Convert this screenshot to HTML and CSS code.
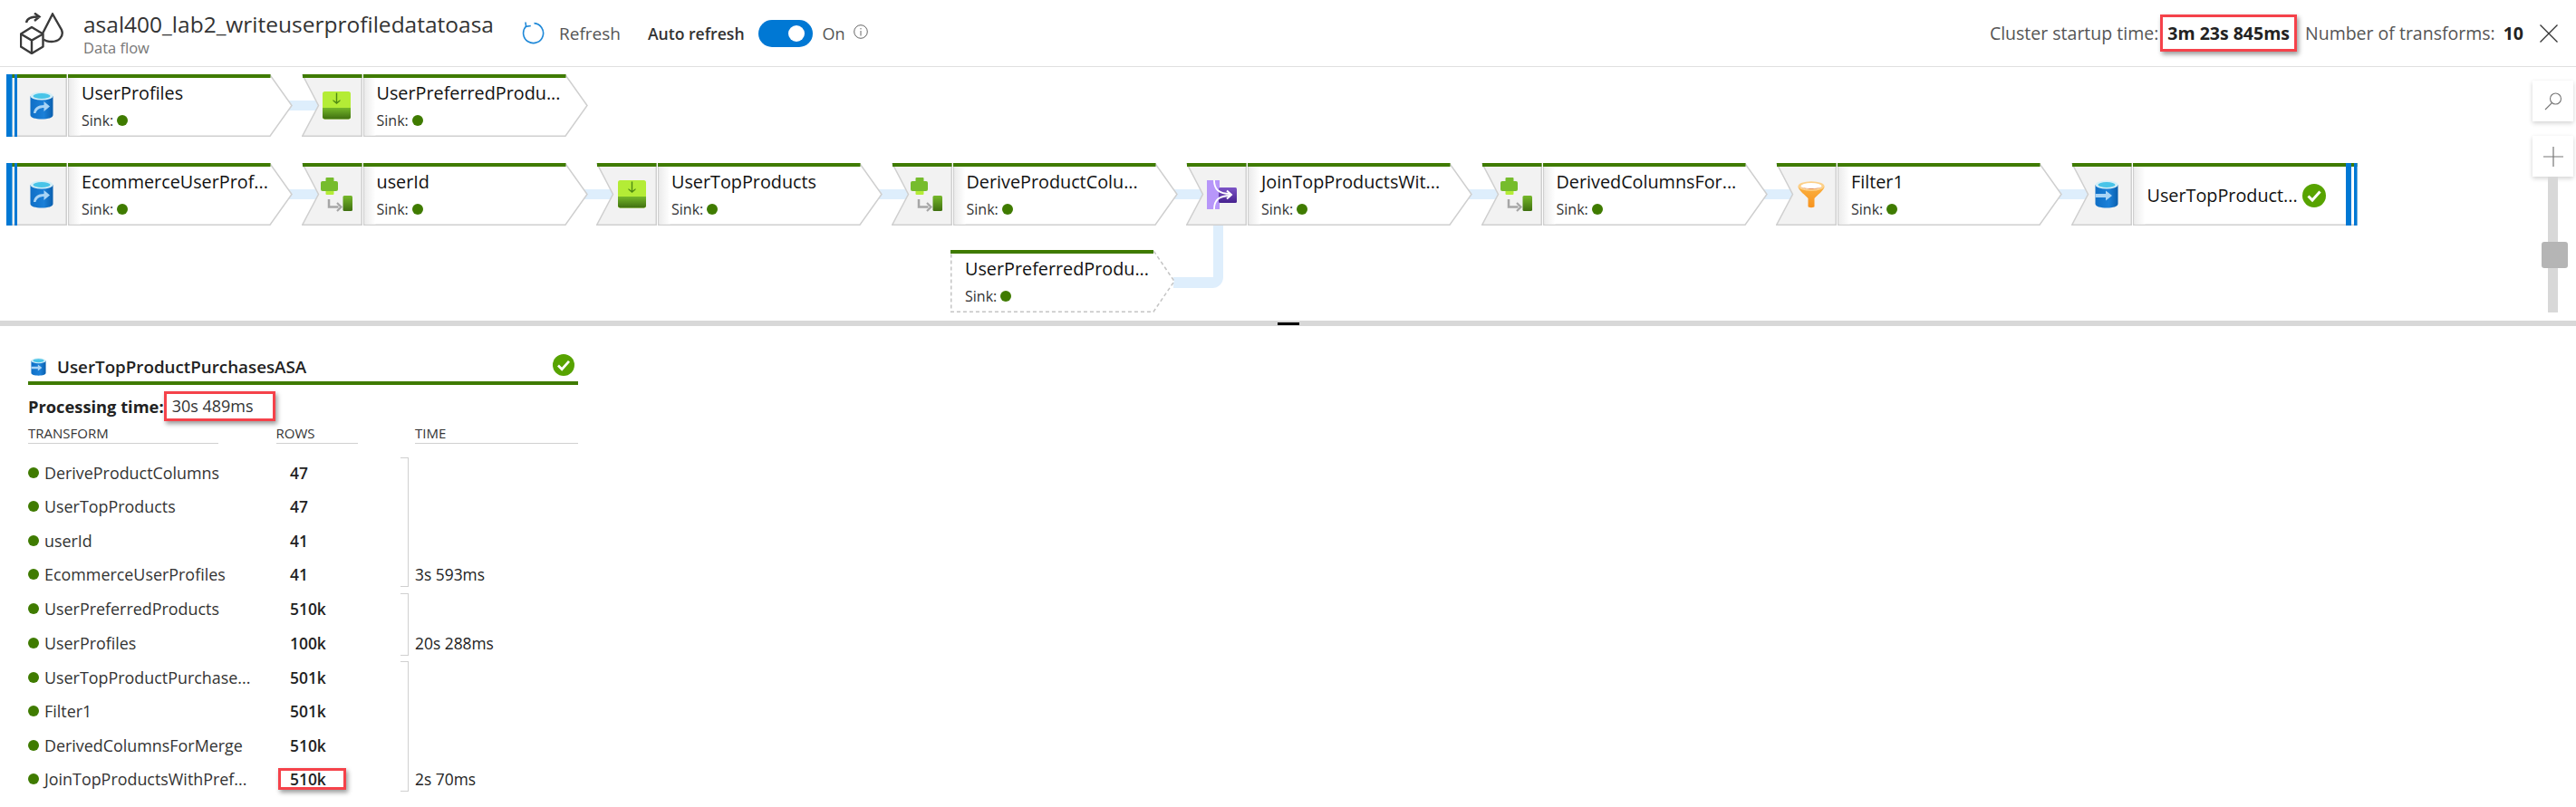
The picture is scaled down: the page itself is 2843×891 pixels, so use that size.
FILE: index.html
```html
<!DOCTYPE html>
<html lang="en">
<head>
    <meta charset="UTF-8">
    <title>Data flow monitoring</title>
    <link rel="stylesheet" href="styles.css">
</head>
<body>
    <svg class="defs" aria-hidden="true">
        <defs>
            <linearGradient id="db-blue" x1="0" y1="0" x2="1" y2="0">
                <stop offset="0" stop-color="#0f6fc6"/>
                <stop offset="0.6" stop-color="#1b80d8"/>
                <stop offset="1" stop-color="#0a5fae"/>
            </linearGradient>
            <linearGradient id="green-down" x1="0" y1="0" x2="0" y2="1">
                <stop offset="0" stop-color="#76b82a"/>
                <stop offset="1" stop-color="#3f6f10"/>
            </linearGradient>
            <linearGradient id="purple-down" x1="0" y1="0" x2="0" y2="1">
                <stop offset="0" stop-color="#7d55c7"/>
                <stop offset="1" stop-color="#47228f"/>
            </linearGradient>
            <linearGradient id="cell-shade" x1="0" y1="0" x2="1" y2="0">
                <stop offset="0" stop-color="#ececec"/>
                <stop offset="1" stop-color="#ffffff"/>
            </linearGradient>
            <linearGradient id="funnel" x1="0" y1="0" x2="0" y2="1">
                <stop offset="0" stop-color="#fbb040"/>
                <stop offset="1" stop-color="#f7931e"/>
            </linearGradient>
        </defs>

        <symbol id="shape-start" viewBox="0 0 316 69">
            <rect x="0.75" y="0.75" width="65.5" height="67.5" fill="#f2f2f2" stroke="#cfcfcf" stroke-width="1.5"/>
            <path d="M68.75 0.75H291L315 34.5L291 68.25H68.75Z" fill="#fff" stroke="#cfcfcf" stroke-width="1.5"/>
            <rect x="69.5" y="4" width="12" height="63.5" fill="url(#cell-shade)"/>
            <rect x="0" y="0" width="66.5" height="4" fill="#3f7b00"/>
            <rect x="68" y="0" width="223.5" height="4" fill="#3f7b00"/>
            <rect x="0" y="0" width="6.5" height="69" fill="#0078d4"/>
            <rect x="9" y="0" width="3" height="69" fill="#0078d4"/>
        </symbol>
        <symbol id="shape-mid" viewBox="0 0 316 69">
            <path d="M1 0.75H66.25V68.25H0.75L18.5 34.5Z" fill="#f2f2f2" stroke="#cfcfcf" stroke-width="1.5"/>
            <path d="M68.75 0.75H291L315 34.5L291 68.25H68.75Z" fill="#fff" stroke="#cfcfcf" stroke-width="1.5"/>
            <rect x="69.5" y="4" width="12" height="63.5" fill="url(#cell-shade)"/>
            <rect x="1" y="0" width="65.5" height="4" fill="#3f7b00"/>
            <rect x="68" y="0" width="223.5" height="4" fill="#3f7b00"/>
        </symbol>
        <symbol id="shape-end" viewBox="0 0 316 69">
            <path d="M1 0.75H66.25V68.25H0.75L18.5 34.5Z" fill="#f2f2f2" stroke="#cfcfcf" stroke-width="1.5"/>
            <rect x="68.75" y="0.75" width="246" height="67.5" fill="#fff" stroke="#cfcfcf" stroke-width="1.5"/>
            <rect x="69.5" y="4" width="12" height="63.5" fill="url(#cell-shade)"/>
            <rect x="1" y="0" width="65.5" height="4" fill="#3f7b00"/>
            <rect x="68" y="0" width="247.5" height="4" fill="#3f7b00"/>
            <rect x="303" y="0" width="6" height="69" fill="#0078d4"/>
            <rect x="312" y="0" width="3.5" height="69" fill="#0078d4"/>
        </symbol>
        <symbol id="shape-ghost" viewBox="0 0 248 69">
            <path d="M0.75 0.75H224L247 34.5L224 68.25H0.75Z" fill="#fff" stroke="#c4c4c4" stroke-width="1.5" stroke-dasharray="4 3"/>
            <rect x="0" y="0" width="224" height="4" fill="#3f7b00"/>
        </symbol>

        <symbol id="icon-source" viewBox="0 0 26 31">
            <path d="M0.5 5V26C0.5 29 6 30.5 13 30.5S25.5 29 25.5 26V5Z" fill="url(#db-blue)"/>
            <ellipse cx="13" cy="5" rx="12.5" ry="4.6" fill="#d4eef7"/>
            <ellipse cx="13" cy="5" rx="9.5" ry="3" fill="#48c4e8"/>
            <path d="M4 24C4.5 18 9 15 15.5 15V11L22 16.5L15.5 22V18C11 18 7.5 20 6.5 24Z" fill="#a9d4f5"/>
        </symbol>
        <symbol id="icon-db-sink" viewBox="0 0 26 31">
            <path d="M0.5 5V26C0.5 29 6 30.5 13 30.5S25.5 29 25.5 26V5Z" fill="url(#db-blue)"/>
            <ellipse cx="13" cy="5" rx="12.5" ry="4.6" fill="#d4eef7"/>
            <ellipse cx="13" cy="5" rx="9.5" ry="3" fill="#48c4e8"/>
            <path d="M0.5 15H12V11.5L19 17L12 22.5V19H0.5Z" fill="#a9d4f5"/>
        </symbol>
        <symbol id="icon-sink" viewBox="0 0 31 31">
            <rect x="0" y="0" width="31" height="30.5" rx="2.5" fill="#b4ec36"/>
            <path d="M0 18H31V28C31 29.5 30 30.5 28.5 30.5H2.5C1 30.5 0 29.5 0 28Z" fill="url(#green-down)"/>
            <path d="M14.800 1.500H16.200V11.500L19.500 9V10.600L15.500 14L11.500 10.600V9L14.800 11.500Z" fill="#4f8a12"/>
        </symbol>
        <symbol id="icon-derive" viewBox="0 0 35 38">
            <rect x="5.500" y="0" width="9" height="6" rx="1" fill="#76bc2d"/>
            <rect x="5.500" y="14" width="9" height="5" rx="1" fill="#b4ec36"/>
            <rect x="0" y="4" width="19" height="11" rx="2" fill="#76bc2d"/>
            <path d="M9 24V32.500H19.500" fill="none" stroke="#a6a6a6" stroke-width="2.500"/>
            <path d="M18 28L22.500 32.500L18 37" fill="none" stroke="#a6a6a6" stroke-width="2.200"/>
            <rect x="24.500" y="20" width="10.500" height="17" rx="1.500" fill="url(#green-down)"/>
        </symbol>
        <symbol id="icon-join" viewBox="0 0 33 32">
            <rect x="0" y="0" width="14" height="32" fill="#b796f9"/>
            <rect x="13" y="8" width="20" height="17" rx="1.5" fill="url(#purple-down)"/>
            <path d="M8 0C8 10 13 15 26 15M8 32C8 22 13 17 26 17" fill="none" stroke="#fff" stroke-width="1.8"/>
            <path d="M22 11.5L27 16L22 20.5" fill="none" stroke="#fff" stroke-width="2"/>
        </symbol>
        <symbol id="icon-filter" viewBox="0 0 30 30">
            <path d="M0.5 6C0.5 10 9 16 11.5 19V28C11.5 29.5 18.5 29.5 18.5 28V19C21 16 29.5 10 29.5 6Z" fill="url(#funnel)"/>
            <ellipse cx="15" cy="5.5" rx="14.5" ry="5.3" fill="#fcd089"/>
            <ellipse cx="15" cy="5.5" rx="11.5" ry="3.6" fill="#fff"/>
            <path d="M4 6.5C8 8.5 22 8.5 26 6.5C23 9.5 7 9.5 4 6.5Z" fill="#d9661f"/>
        </symbol>
        <symbol id="icon-check" viewBox="0 0 26 26">
            <circle cx="13" cy="13" r="13" fill="#57a300"/>
            <path d="M6.5 13.5L11 18L19.5 8.5" fill="none" stroke="#fff" stroke-width="3"/>
        </symbol>
    </svg>

    <header class="topbar">
        <svg class="flow-logo" viewBox="0 0 48 46" fill="none" stroke="#3a3a3a" stroke-width="2.4">
            <path d="M13 16L25.5 23.5V37.5L13 45L1 37.5V23.5Z" stroke-linejoin="round"/>
            <path d="M1 23.5L13 30.5L25.5 23.5M13 30.5V45"/>
            <path d="M25 23L36 1.5L46 19C49 27 42 32 35 32C31 32 28 31 26.5 29.5"/>
            <path d="M7 11C8 6 12 4.500 22 4.500M16 0.500L21.500 4.500L16 9"/>
        </svg>
        <div class="title-block">
            <div class="title">asal400_lab2_writeuserprofiledatatoasa</div>
            <div class="subtitle">Data flow</div>
        </div>
        <div class="refresh">
            <svg class="refresh-icon" viewBox="0 0 25 25" fill="none" stroke="#1e88d8" stroke-width="1.6">
                <path d="M13.500 1.600A11 11 0 1 1 4.600 5"/>
                <path d="M4 0.500L4.600 5.400L9.800 4.500"/>
            </svg>
            <span>Refresh</span>
        </div>
        <div class="auto-refresh">Auto refresh</div>
        <div class="toggle"><span class="toggle-knob"></span></div>
        <div class="toggle-state">On</div>
        <svg class="info-icon" viewBox="0 0 16 16" fill="none" stroke="#666" stroke-width="1">
            <circle cx="8" cy="8" r="7.300"/>
            <path d="M8 7V12.500M8 4V5.400"/>
        </svg>
        <div class="run-info">
            <span>Cluster startup time:</span>
            <strong class="mark startup">3m 23s 845ms</strong>
            <span>Number of transforms:</span>
            <strong class="transforms">10</strong>
            <svg class="close-icon" viewBox="0 0 20 20" fill="none" stroke="#333" stroke-width="1.300">
                <path d="M0.500 0.500L19.500 19.500M19.500 0.500L0.500 19.500"/>
            </svg>
        </div>
    </header>

    <section class="canvas">
        <div class="flow-row">
            <div class="node link">
                <svg class="node-shape"><use href="#shape-start"/></svg>
                <div class="node-icon"><svg class="ic-db"><use href="#icon-source"/></svg></div>
                <div class="node-body">
                    <div class="node-name">UserProfiles</div>
                    <div class="node-sink">Sink: <span class="dot"></span></div>
                </div>
            </div>
            <div class="node">
                <svg class="node-shape"><use href="#shape-mid"/></svg>
                <div class="node-icon"><svg class="ic-sink"><use href="#icon-sink"/></svg></div>
                <div class="node-body">
                    <div class="node-name">UserPreferredProdu...</div>
                    <div class="node-sink">Sink: <span class="dot"></span></div>
                </div>
            </div>
        </div>

        <div class="flow-row">
            <div class="node link">
                <svg class="node-shape"><use href="#shape-start"/></svg>
                <div class="node-icon"><svg class="ic-db"><use href="#icon-source"/></svg></div>
                <div class="node-body">
                    <div class="node-name">EcommerceUserProf...</div>
                    <div class="node-sink">Sink: <span class="dot"></span></div>
                </div>
            </div>
            <div class="node link">
                <svg class="node-shape"><use href="#shape-mid"/></svg>
                <div class="node-icon"><svg class="ic-derive"><use href="#icon-derive"/></svg></div>
                <div class="node-body">
                    <div class="node-name">userId</div>
                    <div class="node-sink">Sink: <span class="dot"></span></div>
                </div>
            </div>
            <div class="node link">
                <svg class="node-shape"><use href="#shape-mid"/></svg>
                <div class="node-icon"><svg class="ic-sink"><use href="#icon-sink"/></svg></div>
                <div class="node-body">
                    <div class="node-name">UserTopProducts</div>
                    <div class="node-sink">Sink: <span class="dot"></span></div>
                </div>
            </div>
            <div class="node link">
                <svg class="node-shape"><use href="#shape-mid"/></svg>
                <div class="node-icon"><svg class="ic-derive"><use href="#icon-derive"/></svg></div>
                <div class="node-body">
                    <div class="node-name">DeriveProductColu...</div>
                    <div class="node-sink">Sink: <span class="dot"></span></div>
                </div>
            </div>
            <div class="node link">
                <svg class="node-shape"><use href="#shape-mid"/></svg>
                <div class="node-icon"><svg class="ic-join"><use href="#icon-join"/></svg></div>
                <div class="node-body">
                    <div class="node-name">JoinTopProductsWit...</div>
                    <div class="node-sink">Sink: <span class="dot"></span></div>
                </div>
            </div>
            <div class="node link">
                <svg class="node-shape"><use href="#shape-mid"/></svg>
                <div class="node-icon"><svg class="ic-derive"><use href="#icon-derive"/></svg></div>
                <div class="node-body">
                    <div class="node-name">DerivedColumnsFor...</div>
                    <div class="node-sink">Sink: <span class="dot"></span></div>
                </div>
            </div>
            <div class="node link">
                <svg class="node-shape"><use href="#shape-mid"/></svg>
                <div class="node-icon"><svg class="ic-filter"><use href="#icon-filter"/></svg></div>
                <div class="node-body">
                    <div class="node-name">Filter1</div>
                    <div class="node-sink">Sink: <span class="dot"></span></div>
                </div>
            </div>
            <div class="node node-end">
                <svg class="node-shape"><use href="#shape-end"/></svg>
                <div class="node-icon"><svg class="ic-db"><use href="#icon-db-sink"/></svg></div>
                <div class="node-body">
                    <div class="node-name">UserTopProduct...</div>
                    <svg class="ic-check"><use href="#icon-check"/></svg>
                </div>
            </div>
        </div>

        <div class="flow-row flow-row-ref">
            <div class="node node-ghost">
                <svg class="node-shape"><use href="#shape-ghost"/></svg>
                <div class="node-body">
                    <div class="node-name">UserPreferredProdu...</div>
                    <div class="node-sink">Sink: <span class="dot"></span></div>
                </div>
                <div class="join-link"></div>
            </div>
        </div>

        <div class="zoom-rail">
            <div class="zoom-card">
                <svg class="zoom-icon" viewBox="0 0 20 20" fill="none" stroke="#777" stroke-width="1.100">
                    <circle cx="12.500" cy="7" r="6"/>
                    <path d="M8.500 11.500L1 19"/>
                </svg>
            </div>
            <div class="zoom-card zoom-plus">
                <svg class="zoom-icon plus" viewBox="0 0 22 22" fill="none" stroke="#777" stroke-width="1.200">
                    <path d="M0 11H22M11 0V22"/>
                </svg>
            </div>
            <div class="zoom-track"><div class="zoom-thumb"></div></div>
            <div class="zoom-card zoom-minus"></div>
        </div>
    </section>

    <div class="splitter"><span class="splitter-grip"></span></div>

    <section class="details">
        <div class="details-head">
            <svg class="ic-head"><use href="#icon-db-sink"/></svg>
            <span class="details-name">UserTopProductPurchasesASA</span>
            <svg class="ic-head-check"><use href="#icon-check"/></svg>
        </div>
        <div class="processing">
            <strong>Processing time:</strong><span class="mark processing-value">30s 489ms</span>
        </div>
        <div class="col-heads">
            <div class="col-head">TRANSFORM</div>
            <div class="col-head">ROWS</div>
            <div class="col-head">TIME</div>
        </div>

        <div class="stage">
            <div class="row"><div class="row-name"><span class="dot"></span>DeriveProductColumns</div><div class="row-count">47</div><div class="row-time"></div></div>
            <div class="row"><div class="row-name"><span class="dot"></span>UserTopProducts</div><div class="row-count">47</div><div class="row-time"></div></div>
            <div class="row"><div class="row-name"><span class="dot"></span>userId</div><div class="row-count">41</div><div class="row-time"></div></div>
            <div class="row"><div class="row-name"><span class="dot"></span>EcommerceUserProfiles</div><div class="row-count">41</div><div class="row-time">3s 593ms</div></div>
        </div>
        <div class="stage">
            <div class="row"><div class="row-name"><span class="dot"></span>UserPreferredProducts</div><div class="row-count">510k</div><div class="row-time"></div></div>
            <div class="row"><div class="row-name"><span class="dot"></span>UserProfiles</div><div class="row-count">100k</div><div class="row-time">20s 288ms</div></div>
        </div>
        <div class="stage">
            <div class="row"><div class="row-name"><span class="dot"></span>UserTopProductPurchase...</div><div class="row-count">501k</div><div class="row-time"></div></div>
            <div class="row"><div class="row-name"><span class="dot"></span>Filter1</div><div class="row-count">501k</div><div class="row-time"></div></div>
            <div class="row"><div class="row-name"><span class="dot"></span>DerivedColumnsForMerge</div><div class="row-count">510k</div><div class="row-time"></div></div>
            <div class="row"><div class="row-name"><span class="dot"></span>JoinTopProductsWithPref...</div><div class="row-count row-count-marked">510k<span class="mark count-mark"></span></div><div class="row-time">2s 70ms</div></div>
        </div>
    </section>
</body>
</html>
```

FILE: styles.css
```css
html, body {
    margin: 0;
    height: 891px;
    overflow: hidden;
    background: white;
}
body {
    font-family: "Open Sans", "Noto Sans", sans-serif;
    color: #222;
}
.defs {
    position: absolute;
    width: 0;
    height: 0;
}
.topbar {
    display: flex;
    align-items: center;
    height: 73px;
    padding-left: 22px;
    border-bottom: 1px solid #e0e0e0;
}
.flow-logo {
    flex: none;
    width: 48px;
    height: 46px;
    margin-right: 22px;
}
.title-block {
    flex: none;
    width: 453px;
}
.title {
    font-size: 24.5px;
    line-height: 32px;
    color: #333;
    white-space: nowrap;
}
.subtitle {
    font-size: 16.5px;
    line-height: 20px;
    color: #777;
}
.refresh {
    display: flex;
    align-items: center;
    gap: 16px;
    margin-left: 31px;
    font-size: 19px;
    color: #555;
}
.refresh-icon {
    flex: none;
    width: 25px;
    height: 25px;
}
.auto-refresh {
    margin-left: 30px;
    font-size: 17.6px;
    font-weight: 600;
    color: #333;
    white-space: nowrap;
}
.toggle {
    display: flex;
    align-items: center;
    justify-content: flex-end;
    flex: none;
    width: 60px;
    height: 30px;
    margin-left: 15px;
    padding-right: 9px;
    box-sizing: border-box;
    border-radius: 15px;
    background: #0078d4;
}
.toggle-knob {
    width: 18px;
    height: 18px;
    border-radius: 50%;
    background: white;
}
.toggle-state {
    margin-left: 11px;
    font-size: 18px;
    color: #555;
}
.info-icon {
    flex: none;
    width: 16px;
    height: 16px;
    margin: -4px 0 0 9px;
}
.run-info {
    display: flex;
    align-items: center;
    margin-left: auto;
    padding-right: 20px;
    font-size: 19.5px;
    color: #555;
    white-space: nowrap;
}
.run-info strong {
    font-weight: 700;
    color: #222;
}
.mark {
    border: 3px solid #f5424a;
    box-shadow: 2px 3px 5px rgba(0, 0, 0, 0.4);
}
.startup {
    display: block;
    margin: 0 9px 0 2px;
    padding: 4px 5px;
}
.transforms {
    margin-left: 9px;
}
.close-icon {
    flex: none;
    width: 20px;
    height: 20px;
    margin-left: 18px;
}

.canvas {
    position: relative;
    isolation: isolate;
    height: 272px;
    padding: 8px 0 0 7px;
    overflow: hidden;
}
.flow-row {
    display: flex;
    gap: 9.5px;
    height: 69px;
    margin-bottom: 29px;
}
.flow-row-ref {
    margin-top: -2px;
    padding-left: 1042px;
}
.node {
    position: relative;
    display: flex;
    flex: none;
    width: 316px;
    height: 69px;
}
.node-shape {
    position: absolute;
    left: 0;
    top: 0;
    width: 316px;
    height: 69px;
}
.node.link::after {
    content: "";
    position: absolute;
    z-index: -1;
    left: 312px;
    top: 29px;
    width: 36px;
    height: 11px;
    background: #deeefc;
}
.node-icon {
    position: relative;
    display: flex;
    align-items: center;
    justify-content: center;
    flex: none;
    width: 58px;
    padding-left: 10px;
}
.node-body {
    position: relative;
    flex: 1;
    padding: 9px 0 0 15px;
}
.node-name {
    font-size: 19.8px;
    line-height: 24px;
    color: #111;
    white-space: nowrap;
}
.node-sink {
    display: flex;
    align-items: center;
    gap: 4px;
    margin-top: 8px;
    font-size: 16px;
    line-height: 20px;
    color: #333;
}
.dot {
    display: inline-block;
    flex: none;
    width: 12px;
    height: 12px;
    border-radius: 50%;
    background: #3f7b00;
}
.node-end .node-body {
    display: flex;
    align-items: center;
    gap: 5px;
    padding: 2px 0 0 16px;
}
.node-end .node-name {
    flex: none;
}
.node-ghost {
    width: 248px;
}
.node-ghost .node-shape {
    width: 248px;
}
.node-ghost .node-body {
    padding-left: 16px;
}
.join-link {
    position: absolute;
    z-index: -1;
    left: 246px;
    top: -28px;
    width: 44px;
    height: 58px;
    border-right: 11px solid #deeefc;
    border-bottom: 12px solid #deeefc;
    border-bottom-right-radius: 12px;
}
.ic-db {
    width: 26px;
    height: 31px;
}
.ic-sink {
    width: 31px;
    height: 31px;
}
.ic-derive {
    width: 35px;
    height: 38px;
}
.ic-join {
    width: 33px;
    height: 32px;
}
.ic-filter {
    width: 30px;
    height: 30px;
}
.ic-check {
    flex: none;
    width: 26px;
    height: 26px;
}

.zoom-rail {
    position: absolute;
    right: 3px;
    top: 15px;
    display: flex;
    flex-direction: column;
    align-items: center;
    width: 45px;
}
.zoom-card {
    display: flex;
    align-items: center;
    justify-content: center;
    width: 45px;
    height: 45px;
    background: white;
    box-shadow: 0 2px 5px rgba(0, 0, 0, 0.18);
}
.zoom-plus {
    margin-top: 16px;
}
.zoom-minus {
    height: 10px;
    box-shadow: none;
}
.zoom-icon {
    width: 20px;
    height: 20px;
}
.zoom-icon.plus {
    width: 22px;
    height: 22px;
}
.zoom-track {
    position: relative;
    width: 11px;
    height: 150px;
    background: #d8d8d8;
}
.zoom-thumb {
    position: absolute;
    left: -7px;
    top: 72px;
    width: 29px;
    height: 29px;
    border-radius: 3px;
    background: #b5b5b5;
}
.splitter {
    display: flex;
    justify-content: center;
    height: 6px;
    background: #d8d8d8;
}
.splitter-grip {
    width: 24px;
    height: 3px;
    margin-top: 2px;
    background: black;
}

.details {
    width: 607px;
    padding-left: 31px;
}
.details-head {
    display: flex;
    align-items: center;
    height: 65px;
    padding-top: 28px;
    box-sizing: border-box;
    border-bottom: 4px solid #3f7b00;
}
.ic-head {
    width: 17px;
    height: 20px;
    margin: 0 0 0 3px;
}
.details-name {
    margin-left: 12px;
    font-size: 18.8px;
    font-weight: 600;
    color: #222;
}
.ic-head-check {
    width: 24px;
    height: 24px;
    margin: 0 4px 4px auto;
}
.processing {
    display: flex;
    align-items: center;
    height: 33px;
    margin-top: 7px;
    font-size: 18.3px;
}
.processing strong {
    font-weight: 700;
}
.processing-value {
    display: block;
    width: 123px;
    box-sizing: border-box;
    padding-left: 6px;
    font-size: 18px;
    line-height: 27px;
    color: #333;
}
.col-heads {
    display: grid;
    grid-template-columns: 210px 90px 180px;
    column-gap: 63.5px;
    margin: 2px 0 14.5px;
}
.col-head {
    height: 22px;
    font-size: 15px;
    line-height: 22px;
    color: #333;
    border-bottom: 1px solid #d0d0d0;
}
.stage {
    position: relative;
    margin-bottom: 1px;
}
.stage::before {
    content: "";
    position: absolute;
    left: 411px;
    top: 0;
    bottom: 5.5px;
    width: 8px;
    border: 1px solid #d0d0d0;
    border-left: none;
}
.row {
    display: grid;
    grid-template-columns: 289px 138px 180px;
    align-items: center;
    box-sizing: border-box;
    height: 37.3px;
    padding-bottom: 2px;
}
.row-name {
    display: flex;
    align-items: center;
    gap: 6px;
    font-size: 17.9px;
    color: #333;
    white-space: nowrap;
}
.row-count, .row-time {
    font-size: 17.4px;
    font-weight: 600;
    color: #222;
}
.row-count-marked {
    position: relative;
}
.count-mark {
    position: absolute;
    left: -13px;
    top: 0;
    width: 69px;
    height: 18px;
}
.row-time {
    font-weight: 500;
}
```
